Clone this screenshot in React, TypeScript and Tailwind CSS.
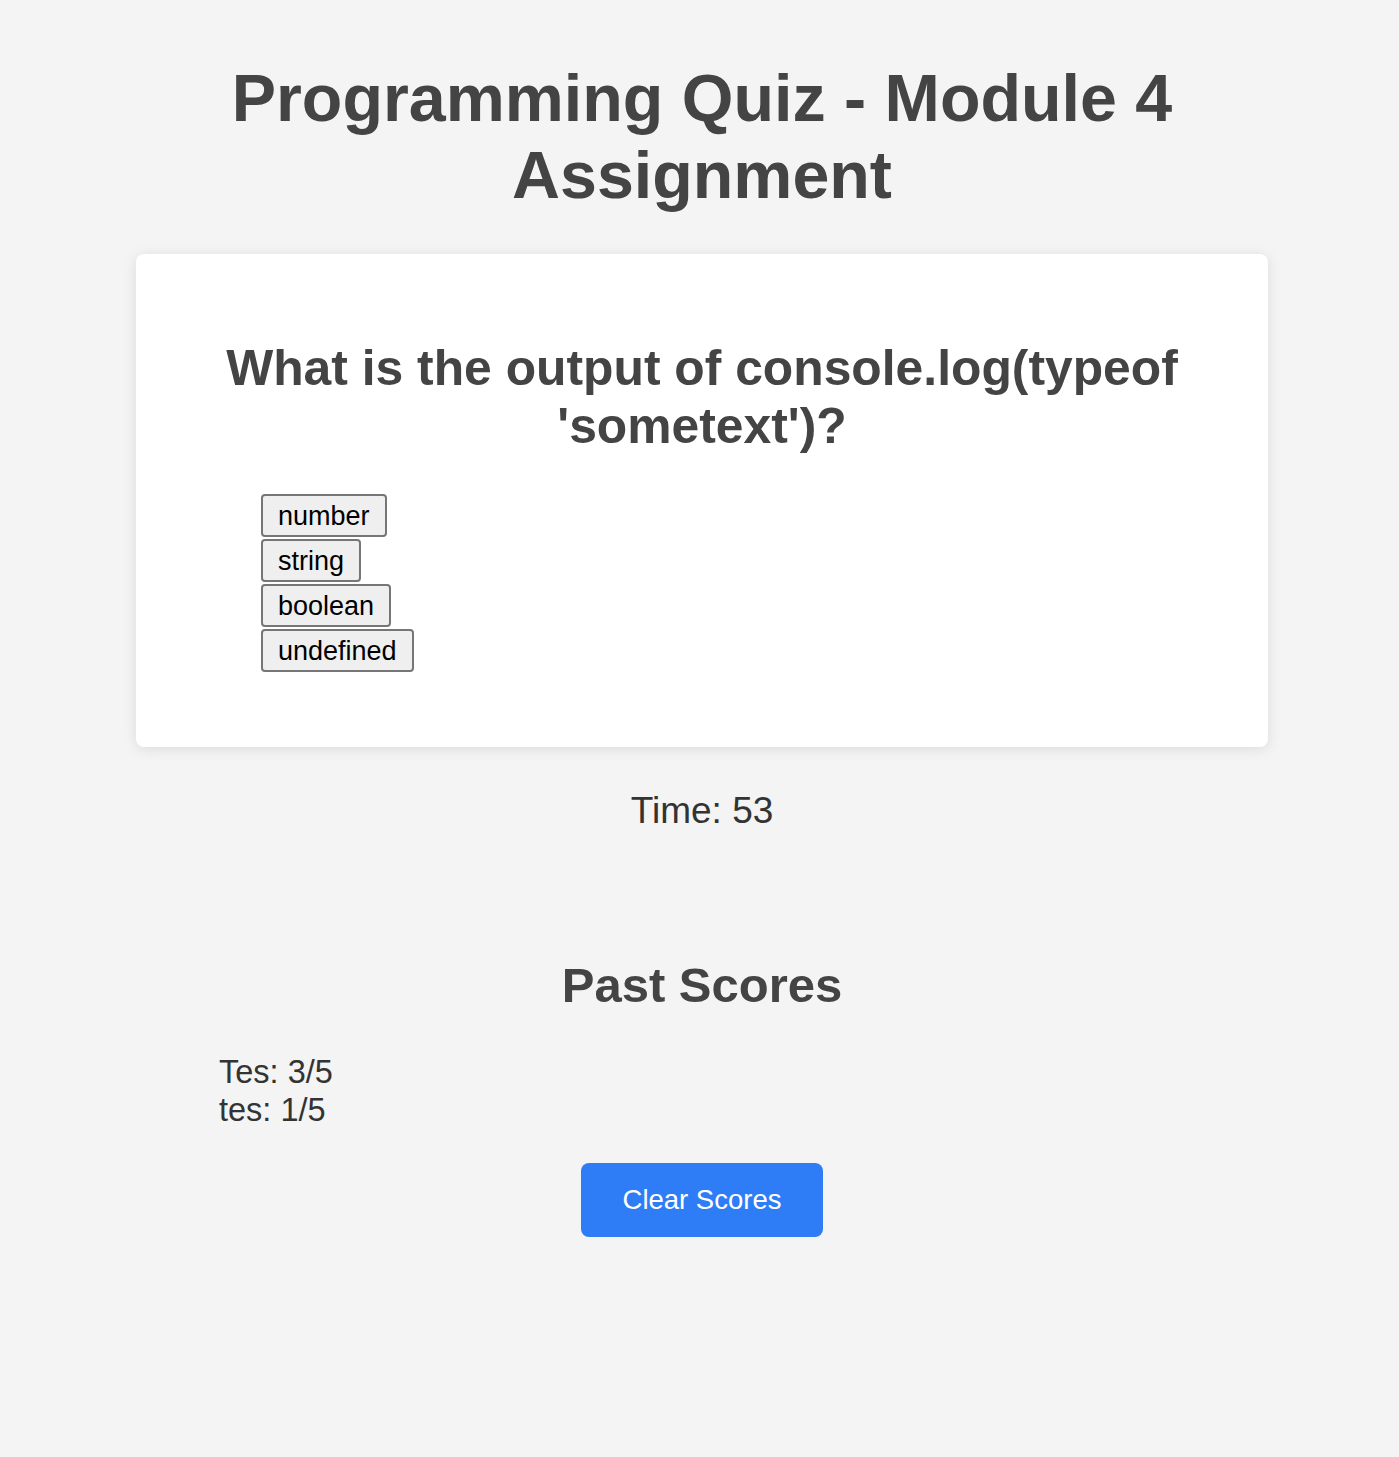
const answers = ["number", "string", "boolean", "undefined"];
const scores = ["Tes: 3/5", "tes: 1/5"];

const App = () => {
  return (
    <div
      className="min-h-screen w-full bg-[#f4f4f4] pl-[5px] flex justify-center"
      style={{ fontFamily: '"Liberation Sans", Arial, sans-serif' }}
    >
      <div className="w-[1132px] flex flex-col">
        <h1 className="pt-[60px] text-center text-[66.4px] leading-[77px] font-bold text-[#444]">
          Programming Quiz - Module 4
          <br />
          Assignment
        </h1>

        <div className="mt-[40px] bg-white rounded-lg shadow-[0_2px_14px_rgba(0,0,0,0.1)] pt-[86px] pb-[75px] px-[60px]">
          <h2 className="text-center text-[49.8px] leading-[57.5px] font-bold text-[#444]">
            What is the output of console.log(typeof
            <br />
            'sometext')?
          </h2>
          <div className="mt-[39px] pl-[65px] flex flex-col items-start gap-[2.5px]">
            {answers.map((answer) => (
              <button
                key={answer}
                className="h-[42.5px] px-[15px] pt-[2px] text-[27px] leading-[31px] text-black bg-[#efefef] border-2 border-[#767676] rounded-[4px]"
              >
                {answer}
              </button>
            ))}
          </div>
        </div>

        <p className="mt-[43px] text-center text-[37px] leading-[41px] text-[#333]">
          Time: 53
        </p>

        <h2 className="mt-[126px] text-center text-[49px] leading-[56px] font-bold text-[#444]">
          Past Scores
        </h2>
        <ul className="mt-[40px] pl-[83px] text-[32.5px] leading-[38px] text-[#333]">
          {scores.map((score) => (
            <li key={score}>{score}</li>
          ))}
        </ul>

        <div className="mt-[34px] flex justify-center">
          <button className="w-[242px] h-[74px] bg-[#2f7df6] text-white text-[27.5px] rounded-lg">
            Clear Scores
          </button>
        </div>
      </div>
    </div>
  );
};

export default App;
